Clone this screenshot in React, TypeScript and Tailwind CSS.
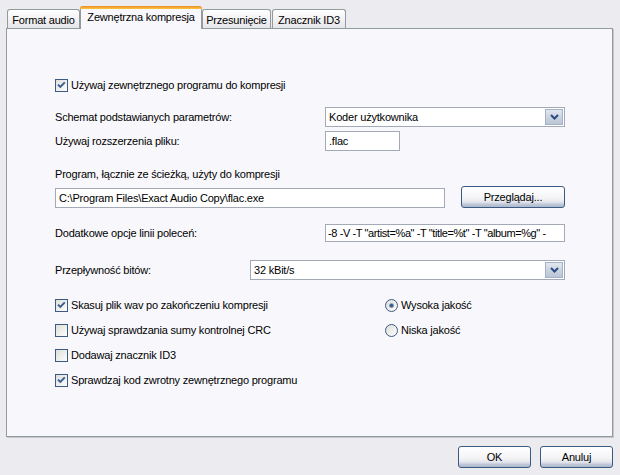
import React from 'react';

// XP-style dialog page: "Zewnętrzna kompresja"

const Check = ({ checked }: { checked?: boolean }) => (
  <svg width="13" height="13" viewBox="0 0 13 13" className="shrink-0">
    <defs>
      <linearGradient id="cbg" x1="0" y1="0" x2="1" y2="1">
        <stop offset="0" stopColor="#DCDCD7" />
        <stop offset="1" stopColor="#FFFFFF" />
      </linearGradient>
    </defs>
    <rect x="0.5" y="0.5" width="12" height="12" fill="url(#cbg)" stroke="#3D5A84" />
    {checked && <path d="M3 5.6 L5.3 8 L9.8 3.4" fill="none" stroke="#3A5D91" strokeWidth="1.9" />}
  </svg>
);

const Radio = ({ checked }: { checked?: boolean }) => (
  <svg width="13" height="13" viewBox="0 0 13 13" className="shrink-0">
    <defs>
      <linearGradient id="rbg" x1="0" y1="0" x2="1" y2="1">
        <stop offset="0" stopColor="#DCDCD7" />
        <stop offset="1" stopColor="#FFFFFF" />
      </linearGradient>
    </defs>
    <circle cx="6.5" cy="6.5" r="6" fill="url(#rbg)" stroke="#3D5A84" />
    {checked && (
      <>
        <circle cx="6.5" cy="6.5" r="2.6" fill="#9AAAC4" />
        <circle cx="6.5" cy="6.5" r="1.7" fill="#3A5A8C" />
      </>
    )}
  </svg>
);

const Arrow = () => (
  <div className="absolute right-px top-px bottom-px w-[18px] border border-[#A4B1C6] bg-[linear-gradient(180deg,#E2E7F0_0%,#C9D2E0_55%,#BAC5D6_100%)] flex items-center justify-center">
    <svg width="9" height="6" viewBox="0 0 9 6">
      <path d="M1 1 L4.5 4.5 L8 1" fill="none" stroke="#2B4C7E" strokeWidth="2" />
    </svg>
  </div>
);

const boxCls = 'relative h-[20px] border border-[#A3A9B6] bg-white px-[3px] flex items-center whitespace-nowrap overflow-hidden';

const btnCls =
  'h-[22px] rounded-[3px] border border-[#3B5A82] bg-[linear-gradient(180deg,#FFFFFF_0%,#F4F4F7_55%,#E4E6EC_75%,#BCC6D8_88%,#AEB9CE_100%)] flex items-center justify-center text-black';

const Row = ({ children, className = '' }: { children: React.ReactNode; className?: string }) => (
  <div className={`flex items-center gap-[3px] h-[16px] ${className}`}>{children}</div>
);

export default function App() {
  return (
    <div className="w-[620px] h-[475px] bg-[#ECEBEF] pt-[6px] pl-[6px] font-['Liberation_Sans',Arial,sans-serif] text-[11px] tracking-[-0.2px] text-black leading-none">
      {/* tabs */}
      <div className="flex items-end h-[22px] pl-px relative z-10">
        <div className="w-[73px] h-[19px] border border-b-0 border-[#919B9C] rounded-t-[3px] bg-[linear-gradient(180deg,#FFFFFF,#E6E6EA)] flex items-center justify-center pt-[2px]">
          Format audio
        </div>
        <div className="w-[122px] h-[23px] -mb-px border-x border-[#919B9C] rounded-t-[3px] bg-[#F8F8FC] flex flex-col">
          <div className="h-[3px] rounded-t-[3px] bg-[linear-gradient(180deg,#E68B2C,#FFC73C)] -mx-px" />
          <div className="flex-1 flex items-center justify-center pb-[3px]">Zewnętrzna kompresja</div>
        </div>
        <div className="w-[69px] h-[19px] border border-b-0 border-[#919B9C] rounded-t-[3px] bg-[linear-gradient(180deg,#FFFFFF,#E6E6EA)] flex items-center justify-center pt-[2px]">
          Przesunięcie
        </div>
        <div className="ml-px w-[74px] h-[19px] border border-b-0 border-[#919B9C] rounded-t-[3px] bg-[linear-gradient(180deg,#FFFFFF,#E6E6EA)] flex items-center justify-center pt-[2px]">
          Znacznik ID3
        </div>
      </div>

      {/* panel */}
      <div className="w-[607px] h-[409px] border border-[#919B9C] bg-[#F8F8FC] shadow-[1px_1px_0_#C6C6CE] pl-[48px] pt-[48px]">
        <Row>
          <Check checked />
          <span>Używaj zewnętrznego programu do kompresji</span>
        </Row>

        <div className="flex items-center mt-[14px] h-[20px]">
          <span className="w-[270px]">Schemat podstawianych parametrów:</span>
          <div className={`${boxCls} w-[240px]`}>
            Koder użytkownika
            <Arrow />
          </div>
        </div>

        <div className="flex items-center mt-[4px] h-[20px]">
          <span className="w-[270px]">Używaj rozszerzenia pliku:</span>
          <div className={`${boxCls} w-[75px]`}>.flac</div>
        </div>

        <div className="mt-[16px] h-[14px] flex items-center">Program, łącznie ze ścieżką, użyty do kompresji</div>

        <div className="flex items-end mt-[5px] h-[22px]">
          <div className={`${boxCls} w-[390px]`}>C:\Program Files\Exact Audio Copy\flac.exe</div>
          <div className={`${btnCls} ml-[16px] w-[104px]`}>Przeglądaj...</div>
        </div>

        <div className="flex items-center mt-[16px] h-[18px]">
          <span className="w-[270px]">Dodatkowe opcje linii poleceń:</span>
          <div className={`${boxCls} !h-[18px] w-[240px] !px-[2px] tracking-[-0.4px]`}>-8 -V -T "artist=%a" -T "title=%t" -T "album=%g" -</div>
        </div>

        <div className="flex items-center mt-[18px] h-[20px]">
          <span className="w-[195px]">Przepływność bitów:</span>
          <div className={`${boxCls} w-[315px]`}>
            32 kBit/s
            <Arrow />
          </div>
        </div>

        <div className="grid grid-cols-[330px_auto] gap-y-[9px] mt-[17px]">
          <Row>
            <Check checked />
            <span>Skasuj plik wav po zakończeniu kompresji</span>
          </Row>
          <Row>
            <Radio checked />
            <span>Wysoka jakość</span>
          </Row>
          <Row>
            <Check />
            <span>Używaj sprawdzania sumy kontrolnej CRC</span>
          </Row>
          <Row>
            <Radio />
            <span>Niska jakość</span>
          </Row>
          <Row className="col-span-2">
            <Check />
            <span>Dodawaj znacznik ID3</span>
          </Row>
          <Row className="col-span-2">
            <Check checked />
            <span>Sprawdzaj kod zwrotny zewnętrznego programu</span>
          </Row>
        </div>
      </div>

      {/* bottom buttons */}
      <div className="flex justify-end gap-[9px] w-[607px] mt-[9px]">
        <div className={`${btnCls} w-[73px]`}>OK</div>
        <div className={`${btnCls} w-[73px]`}>Anuluj</div>
      </div>
    </div>
  );
}
